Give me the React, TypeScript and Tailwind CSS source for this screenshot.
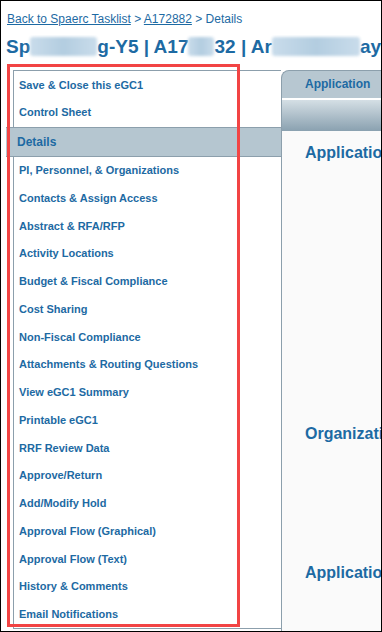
import React from 'react';

const menuTop = ['Save & Close this eGC1', 'Control Sheet'];

const menuRest = [
  'PI, Personnel, & Organizations',
  'Contacts & Assign Access',
  'Abstract & RFA/RFP',
  'Activity Locations',
  'Budget & Fiscal Compliance',
  'Cost Sharing',
  'Non-Fiscal Compliance',
  'Attachments & Routing Questions',
  'View eGC1 Summary',
  'Printable eGC1',
  'RRF Review Data',
  'Approve/Return',
  'Add/Modify Hold',
  'Approval Flow (Graphical)',
  'Approval Flow (Text)',
  'History & Comments',
  'Email Notifications',
];

// blurred patch where the original screenshot hid text
const Redact: React.FC<{ w: string }> = ({ w }) => (
  <span className={`inline-block h-[19px] align-[-3px] rounded-[3px] bg-gradient-to-r from-[#c9dceb] via-[#b3cde0] to-[#c9dceb] blur-[1.5px] ${w}`} />
);

const MenuItem: React.FC<{ label: string }> = ({ label }) => (
  <div className="h-[27.75px] flex items-center pl-[5px] text-[11px] font-bold text-[#1d6aa3] whitespace-nowrap">
    {label}
  </div>
);

const App: React.FC = () => {
  return (
    <div className="relative w-[382px] h-[632px] overflow-hidden border border-black bg-white font-['Liberation_Sans',Arial,sans-serif] text-[#1d6aa3]">
      {/* Breadcrumb */}
      <div className="pt-[11px] pl-[6px] text-[12px] leading-[14px] whitespace-nowrap">
        <a className="underline">Back to Spaerc Tasklist</a>
        <span> &gt; </span>
        <a className="underline">A172882</a>
        <span> &gt; Details</span>
      </div>

      {/* Title */}
      <div className="mt-[9px] pl-[5px] text-[19px] leading-[24px] font-bold whitespace-nowrap overflow-hidden">
        Sp<Redact w="w-[67px]" />g-Y5 | A17<Redact w="w-[26px]" />32 | Ar<Redact w="w-[88px]" />ay
      </div>

      {/* Main */}
      <div className="mt-[11px] flex h-[561px]">
        {/* Sidebar */}
        <div className="ml-[12px] w-[268px] shrink-0 self-start border-l border-t border-b border-[#8c9fac]">
          {menuTop.map((m) => (
            <MenuItem key={m} label={m} />
          ))}
          <div className="ml-[-8px] h-[30px] flex items-center pl-[11px] bg-[#b5c6d0] border-t border-b border-[#8c9fac] text-[12px] font-bold">
            Details
          </div>
          {menuRest.map((m) => (
            <MenuItem key={m} label={m} />
          ))}
        </div>

        {/* Content */}
        <div className="flex-1 min-w-0 overflow-hidden flex flex-col">
          <div className="h-[28px] shrink-0 rounded-tl-[8px] border-t border-l border-[#8c9fac] bg-[#b7c7d1] pl-[23px] text-[12px] font-bold leading-[27px] whitespace-nowrap">
            Application
          </div>
          <div className="h-[2px] shrink-0 border-l border-[#8c9fac] bg-white" />
          <div className="h-[31px] shrink-0 border-l border-[#8c9fac] bg-gradient-to-b from-[#d5dfe5] to-[#8aa1b0]" />
          <div className="flex-1 border-l border-[#8c9fac] bg-[#fafafa] pl-[23px] text-[16px] font-bold leading-[20px] whitespace-nowrap">
            <div className="mt-[12px]">Application</div>
            <div className="mt-[261px]">Organization</div>
            <div className="mt-[119px]">Application</div>
          </div>
        </div>
      </div>

      {/* red annotation box */}
      <div className="absolute left-[6px] top-[63px] w-[233px] h-[563px] border-[3px] border-[#f24444]" />
    </div>
  );
};

export default App;
